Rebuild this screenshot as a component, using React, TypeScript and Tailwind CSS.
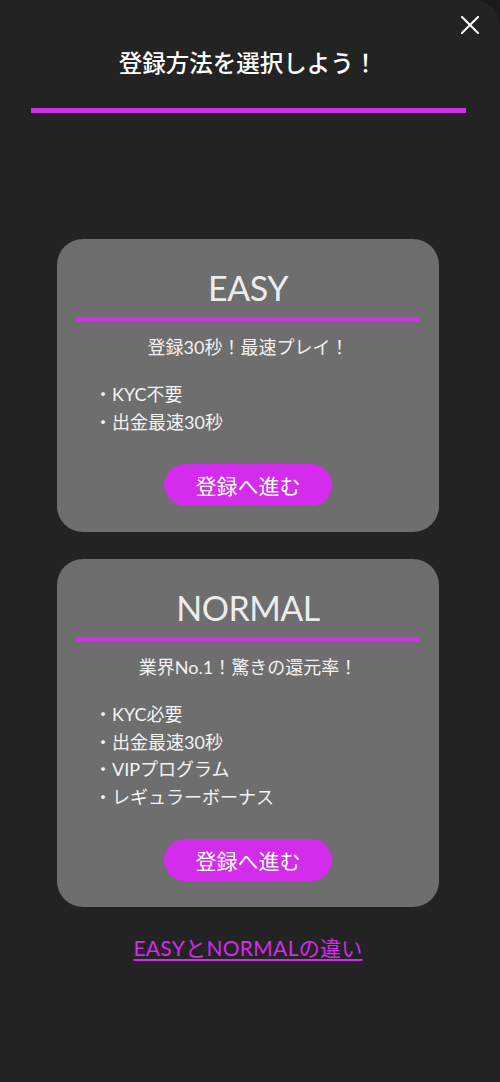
import React from "react";

const PURPLE = "bg-[#d42cec]";

type Plan = {
  name: string;
  lead: string;
  points: string[];
};

const plans: Plan[] = [
  {
    name: "EASY",
    lead: "登録30秒！最速プレイ！",
    points: ["KYC不要", "出金最速30秒"],
  },
  {
    name: "NORMAL",
    lead: "業界No.1！驚きの還元率！",
    points: ["KYC必要", "出金最速30秒", "VIPプログラム", "レギュラーボーナス"],
  },
];

const PlanCard = ({ plan }: { plan: Plan }) => (
  <div className="w-[382px] rounded-[26px] bg-[#6e6e6e] pt-[29px] pb-[26px] px-[19px] flex flex-col items-center">
    <h2 className="text-[34px] leading-[40px] text-[#ececec] tracking-[-0.5px]">{plan.name}</h2>
    <div className={`mt-[9px] h-[5px] w-full ${PURPLE}`} />
    <p className="mt-[11px] text-[18px] leading-[28px] text-[#f2f2f2]">{plan.lead}</p>
    {/* bullet list */}
    <ul className="mt-[20px] self-stretch pl-[18px] flex flex-col text-[18px] leading-[27.5px] text-[#f4f4f4]">
      {plan.points.map((p) => (
        <li key={p} className="flex items-center">
          <span className="w-[18px] text-center">・</span>
          <span>{p}</span>
        </li>
      ))}
    </ul>
    <button className={`mt-[28px] h-[42px] w-[168px] rounded-full ${PURPLE} text-white text-[21px] leading-none`}>
      登録へ進む
    </button>
  </div>
);

export default function App() {
  return (
    <div className="min-h-[1082px] w-[500px] bg-[#1b1b1b]">
      <div
        className="relative min-h-[1082px] w-[500px] pr-[4px] rounded-tr-[26px] bg-[#232323] flex flex-col items-center"
        style={{ fontFamily: '"Lato", "Noto Sans CJK JP", sans-serif' }}>
        {/* close button */}
        <button className="absolute right-[21px] top-[16px] w-[18px] h-[18px]" aria-label="close">
          <svg viewBox="0 0 18 18" width="18" height="18" fill="none" stroke="white" strokeWidth="2" strokeLinecap="square">
            <path d="M1 1L17 17M17 1L1 17" />
          </svg>
        </button>

        <h1 className="mt-[48px] text-[23.5px] leading-[30px] font-medium text-white">登録方法を選択しよう！</h1>
        <div className={`mt-[30px] h-[5px] w-[435px] ${PURPLE}`} />

        <div className="mt-[126px] flex flex-col gap-[27px]">
          {plans.map((plan) => (
            <PlanCard key={plan.name} plan={plan} />
          ))}
        </div>

        <a href="#" className="mt-[27px] text-[21px] leading-[28px] text-[#d42cec] underline underline-offset-[3px] tracking-[0.3px]">
          EASYとNORMALの違い
        </a>
      </div>
    </div>
  );
}
